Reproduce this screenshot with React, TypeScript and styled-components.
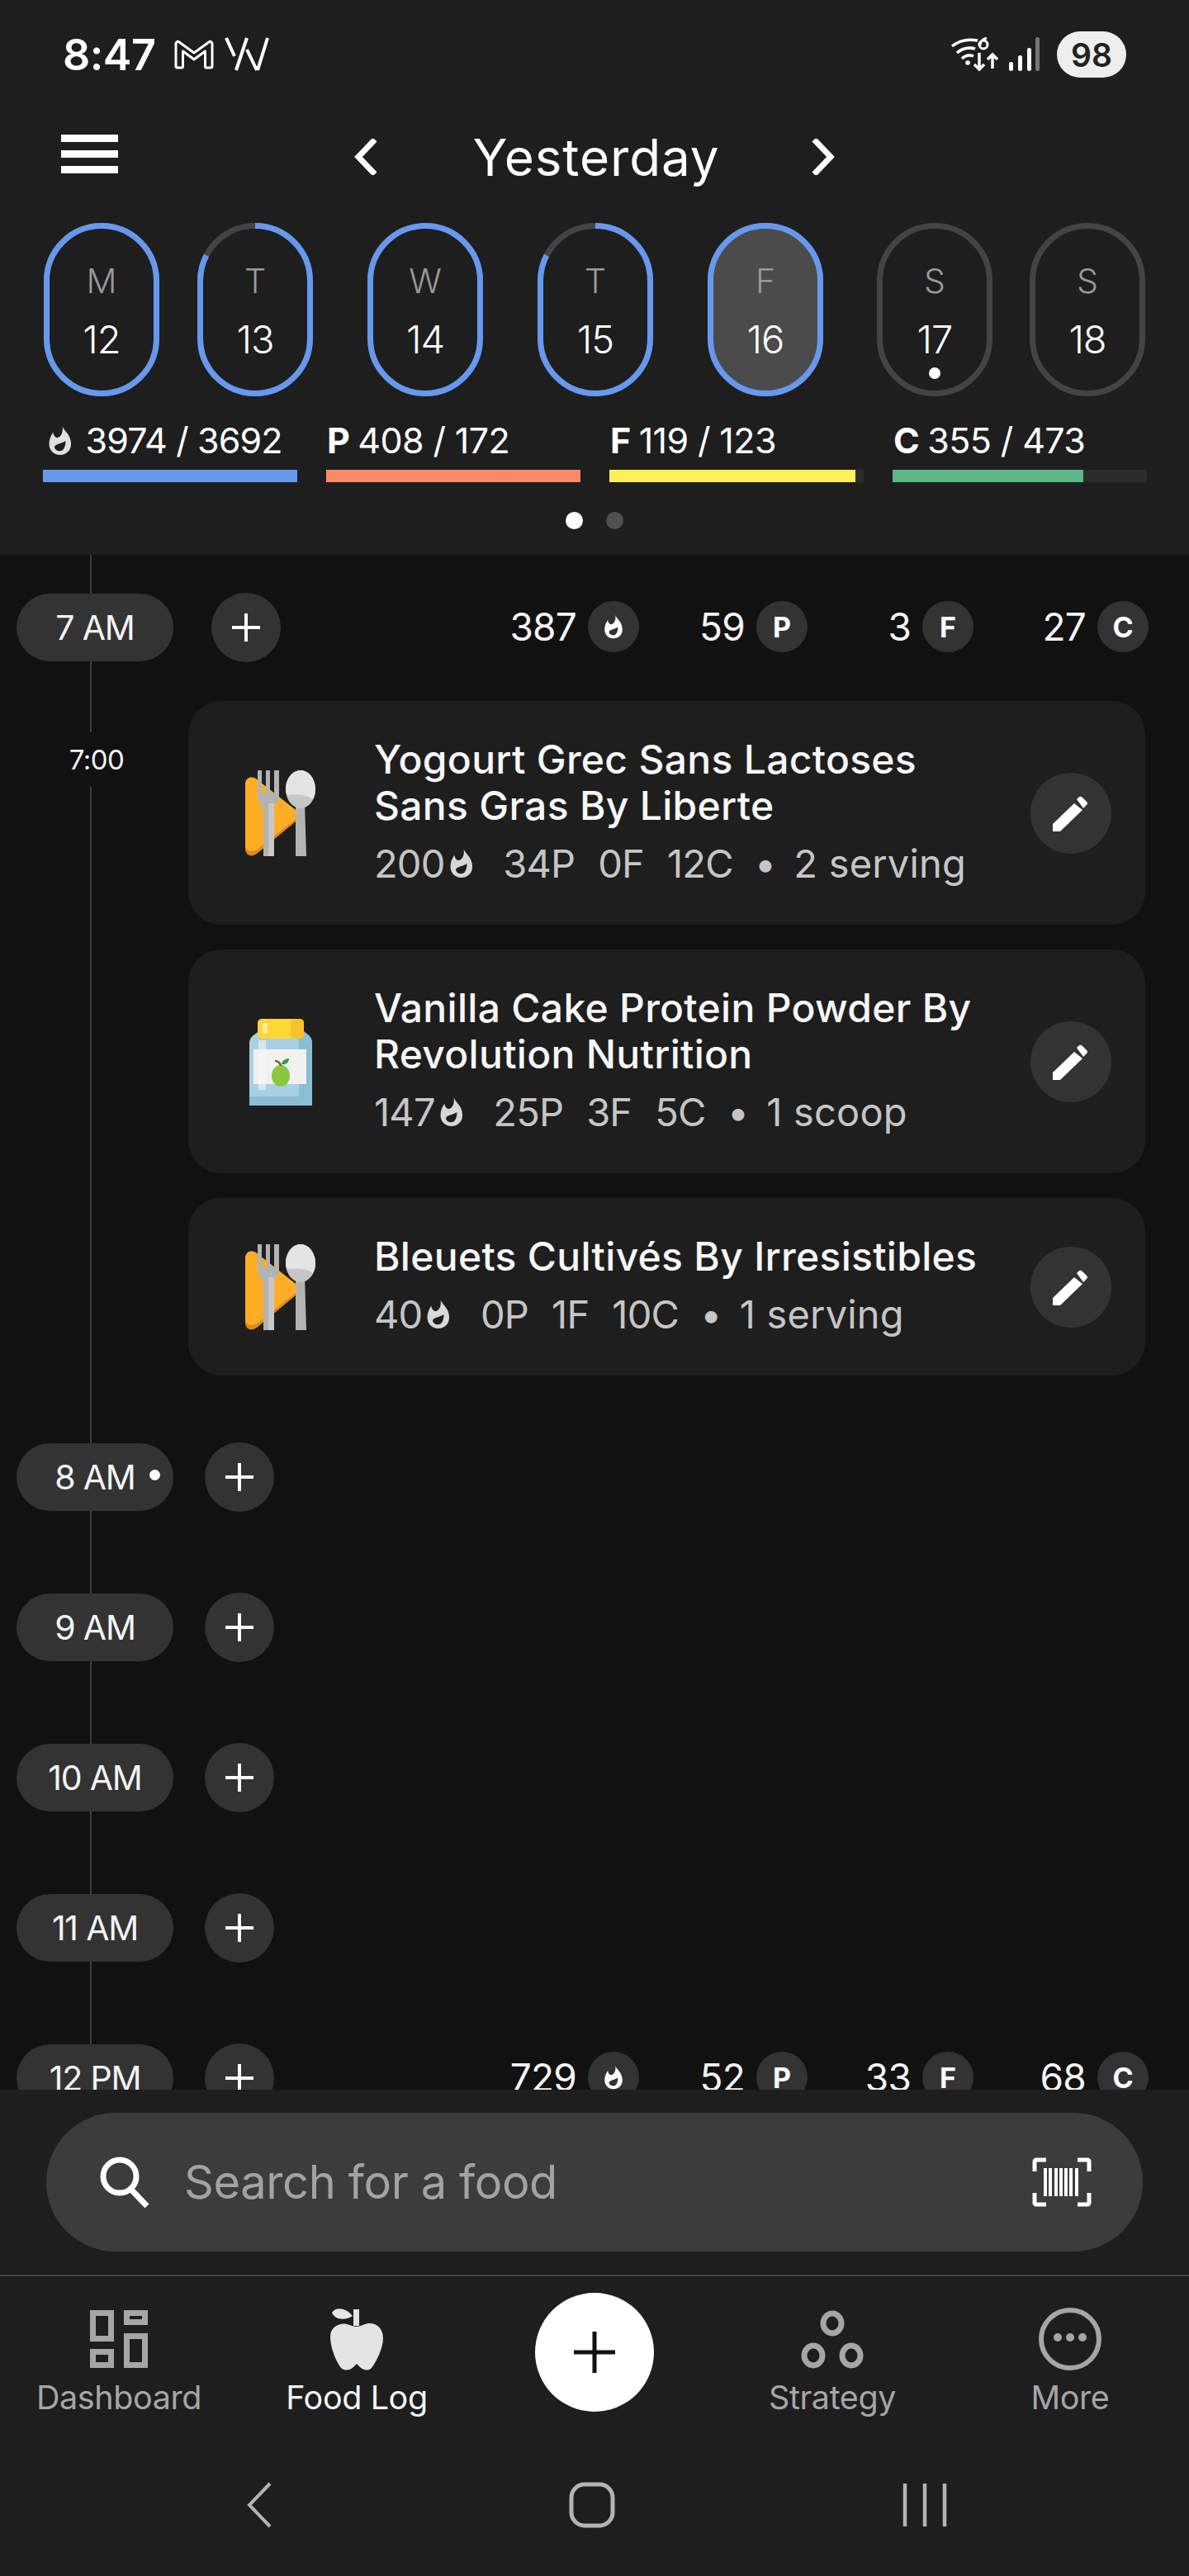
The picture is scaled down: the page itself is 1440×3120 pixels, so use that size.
import styled, { createGlobalStyle } from "styled-components";

const GlobalStyle = createGlobalStyle`
  html, body {
    margin: 0;
    padding: 0;
    background: #111111;
    font-family: "Inter", "Roboto", sans-serif;
    color: #ffffff;
  }
  * {
    box-sizing: border-box;
  }
`;

const StyledPage = styled.div`
  width: 1440px;
  height: 3120px;
  display: flex;
  flex-direction: column;
  overflow: hidden;
`;

const StyledHeader = styled.header`
  background: #1e1e1e;
  height: 672px;
  flex: none;
  padding-top: 38px;
`;

const StyledStatusBar = styled.div`
  height: 56px;
  display: flex;
  align-items: center;
  padding: 0 76px 0 76px;
`;

const StyledClock = styled.span`
  font-size: 52px;
  font-weight: 600;
  letter-spacing: -0.5px;
  margin-right: 22px;
`;

const StyledStatusRight = styled.div`
  margin-left: auto;
  display: flex;
  align-items: center;
`;

const StyledBattery = styled.div`
  width: 84px;
  height: 56px;
  border-radius: 28px;
  background: #eeeeee;
  color: #222222;
  font-size: 39px;
  font-weight: 600;
  display: flex;
  align-items: center;
  justify-content: center;
  margin-left: 20px;
`;

const StyledTopNav = styled.div`
  height: 100px;
  margin-top: 46px;
  display: grid;
  grid-template-columns: 429px 582px;
  align-items: center;
`;

const StyledHamburger = styled.div`
  width: 69px;
  margin: -8px 0 0 74px;
  display: flex;
  flex-direction: column;
  gap: 10px;
  & > span {
    height: 9px;
    background: #ffffff;
  }
`;

const StyledDateSwitch = styled.div`
  display: flex;
  align-items: center;
  justify-content: space-between;
`;

const StyledDateTitle = styled.h1`
  margin: 0 0 0 4px;
  font-size: 62px;
  font-weight: 400;
  letter-spacing: 0.9px;
`;

const StyledDayRow = styled.div`
  display: flex;
  margin-top: 30px;
  padding-left: 53px;
`;

const StyledDay = styled.div<{ $gap: number; $selected?: boolean }>`
  position: relative;
  width: 140px;
  height: 210px;
  margin-left: ${(props) => props.$gap}px;
  border-radius: 70px;
  background: ${(props) => (props.$selected ? "#4b4b4b" : "transparent")};
  display: flex;
  flex-direction: column;
  align-items: center;
  padding-top: 46px;
`;

const StyledRing = styled.svg`
  position: absolute;
  left: 0;
  top: 0;
`;

const StyledDayLetter = styled.span`
  font-size: 41px;
  line-height: 48px;
  color: #9a9a9a;
  font-weight: 300;
`;

const StyledDayNumber = styled.span`
  font-size: 47px;
  line-height: 54px;
  margin-top: 20px;
  color: #ffffff;
  font-weight: 300;
  letter-spacing: -1px;
`;

const StyledTodayDot = styled.span`
  position: absolute;
  left: 63px;
  top: 175px;
  width: 14px;
  height: 14px;
  border-radius: 50%;
  background: #ffffff;
`;

const StyledMacroRow = styled.div`
  display: grid;
  grid-template-columns: repeat(4, 308px);
  column-gap: 35px;
  margin-top: 30px;
  padding-left: 52px;
`;

const StyledMacroText = styled.div`
  display: flex;
  align-items: center;
  height: 46px;
  font-size: 43px;
  font-weight: 400;
  letter-spacing: -0.6px;
  gap: 10px;
  padding-left: 6px;
  & > b {
    font-weight: 700;
    margin-left: -5px;
  }
`;

const StyledCalorieTotal = styled.span`
  margin-left: 6px;
  letter-spacing: -0.9px;
`;

const StyledBarTrack = styled.div`
  height: 15px;
  margin-top: 13px;
  background: #2c2c2c;
`;

const StyledBarFill = styled.div<{ $color: string }>`
  height: 100%;
  background: ${(props) => props.$color};
`;

const StyledPager = styled.div`
  display: flex;
  justify-content: center;
  gap: 28px;
  margin-top: 36px;
`;

const StyledPagerDot = styled.span<{ $active?: boolean }>`
  width: 21px;
  height: 21px;
  border-radius: 50%;
  background: ${(props) => (props.$active ? "#ffffff" : "#505050")};
`;

const StyledTimeline = styled.main`
  position: relative;
  flex: 1;
  min-height: 0;
  overflow: hidden;
  background: #111111;
  padding: 47px 0 0 20px;
`;

const StyledRail = styled.div`
  position: absolute;
  left: 109px;
  top: 0;
  bottom: 0;
  width: 2px;
  background: #3d3d3d;
`;

const StyledHourRow = styled.div<{ $spaced?: boolean }>`
  position: relative;
  display: flex;
  align-items: center;
  height: 82px;
  margin-bottom: ${(props) => (props.$spaced ? "100px" : "0")};
`;

const StyledHourPill = styled.div`
  position: relative;
  width: 190px;
  height: 82px;
  border-radius: 41px;
  background: #333333;
  display: flex;
  align-items: center;
  justify-content: center;
  font-size: 41px;
  letter-spacing: -1.2px;
  color: #f4f4f4;
`;

const StyledNowDot = styled.span`
  position: absolute;
  left: 161px;
  top: 32px;
  width: 13px;
  height: 13px;
  border-radius: 50%;
  background: #ffffff;
`;

const StyledPlusButton = styled.div<{ $gap: number }>`
  width: 84px;
  height: 84px;
  flex: none;
  border-radius: 50%;
  background: #333333;
  margin-left: ${(props) => props.$gap}px;
  display: flex;
  align-items: center;
  justify-content: center;
`;

const StyledHourStats = styled.div`
  position: absolute;
  right: 49px;
  top: 9px;
  display: grid;
  grid-template-columns: 210px 204px 201px 212px;
`;

const StyledStat = styled.div`
  display: flex;
  align-items: center;
  justify-content: flex-end;
  gap: 14px;
  font-size: 46px;
  letter-spacing: -0.8px;
  color: #f4f4f4;
`;

const StyledStatBadge = styled.span`
  width: 62px;
  height: 62px;
  border-radius: 50%;
  background: #333333;
  display: flex;
  align-items: center;
  justify-content: center;
  font-size: 34px;
  font-weight: 700;
  letter-spacing: 0;
  color: #ffffff;
`;

const StyledEntries = styled.div`
  position: relative;
  display: grid;
  grid-template-columns: 208px 1159px;
  margin-top: 48px;
  margin-bottom: 82px;
`;

const StyledEntryTime = styled.div`
  justify-self: center;
  align-self: start;
  margin: 38px 0 0 -14px;
  height: 66px;
  width: 90px;
  background: #111111;
  display: flex;
  align-items: center;
  justify-content: center;
  font-size: 33px;
  letter-spacing: -0.6px;
  color: #f2f2f2;
`;

const StyledCards = styled.div`
  display: flex;
  flex-direction: column;
  gap: 30px;
`;

const StyledCard = styled.div`
  display: flex;
  align-items: center;
  background: #1e1e1e;
  border-radius: 40px;
  padding: 43px 41px 43px 32px;
`;

const StyledFoodThumb = styled.svg`
  flex: none;
  margin: -20px 33px -20px 0;
`;

const StyledCardBody = styled.div`
  flex: 1;
  min-width: 0;
  padding-right: 10px;
`;

const StyledCardTitle = styled.div`
  max-width: 770px;
  font-size: 48px;
  line-height: 56px;
  font-weight: 500;
  letter-spacing: 0.3px;
  color: #f6f6f6;
`;

const StyledCardMeta = styled.div`
  display: flex;
  align-items: center;
  height: 60px;
  margin: 11px 0 2px;
  font-size: 47px;
  letter-spacing: -0.8px;
  color: #c6c6c6;
`;

const StyledCalories = styled.span`
  display: flex;
  align-items: center;
  gap: 5px;
  margin-right: 36px;
`;

const StyledMetaItem = styled.span`
  margin-right: 28px;
`;

const StyledMetaDot = styled.span`
  margin: 0 22px 0 -2px;
`;

const StyledServing = styled.span`
  letter-spacing: 0.2px;
`;

const StyledEditButton = styled.div`
  width: 98px;
  height: 98px;
  flex: none;
  border-radius: 50%;
  background: #333333;
  display: flex;
  align-items: center;
  justify-content: center;
`;

const StyledBottom = styled.footer`
  background: #1e1e1e;
  height: 589px;
  flex: none;
  position: relative;
`;

const StyledSearchWrap = styled.div`
  padding: 28px 56px;
  border-bottom: 2px solid #444444;
`;

const StyledSearchBar = styled.div`
  height: 168px;
  border-radius: 84px;
  background: #3c3c3c;
  display: flex;
  align-items: center;
  padding: 0 62px 0 64px;
`;

const StyledSearchText = styled.span`
  font-size: 56px;
  letter-spacing: -0.4px;
  color: #a3a3a3;
  margin-left: 41px;
  flex: 1;
`;

const StyledTabs = styled.nav`
  display: grid;
  grid-template-columns: repeat(5, 288px);
  height: 191px;
  padding-top: 36px;
`;

const StyledTab = styled.div<{ $active?: boolean }>`
  display: flex;
  flex-direction: column;
  align-items: center;
  color: ${(props) => (props.$active ? "#f4f4f4" : "#a6a6a6")};
  font-size: 39.5px;
  line-height: 48px;
  letter-spacing: -0.4px;
`;

const StyledTabIcon = styled.div`
  height: 80px;
  margin-bottom: 7px;
  display: flex;
  align-items: center;
  justify-content: center;
`;

const StyledAddTab = styled.div`
  width: 144px;
  height: 144px;
  border-radius: 50%;
  background: #ffffff;
  justify-self: center;
  margin-top: -16px;
  display: flex;
  align-items: center;
  justify-content: center;
`;

const StyledSystemNav = styled.div`
  height: 172px;
  display: grid;
  grid-template-columns: repeat(3, 403px);
  justify-content: center;
  align-items: center;
  justify-items: center;
  padding-right: 6px;
`;

const StyledWave = styled.svg`
  margin-left: 12px;
`;

const StyledSignal = styled.svg`
  margin-left: 12px;
`;

function FlameIcon({ height, color }: { height: number; color: string }) {
  return (
    <svg width={height * 0.8} height={height} viewBox="11 13 30 39">
      <path
        d="M29 14C30 20 40 24 40 37C40 46 33 51 26 51C18 51 12 45 12 37C12 31 14 27 17 22C18 27 20 29 23 29C28 27 30 21 29 14ZM33 33C27 37 19 37 19 41C19 44 22 46 26 46C30 46 33 41 33 33Z"
        fill={color}
        fillRule="evenodd"
      />
    </svg>
  );
}

function PlusIcon({ size, weight, color }: { size: number; weight: number; color: string }) {
  const mid = size / 2;
  return (
    <svg width={size} height={size}>
      <path d={`M${mid} 0V${size}M0 ${mid}H${size}`} stroke={color} strokeWidth={weight} />
    </svg>
  );
}

function Chevron({ flip }: { flip?: boolean }) {
  return (
    <svg width="28" height="44" viewBox="0 0 28 44">
      <path
        d={flip ? "M3 1l20 21L3 43" : "M25 1L5 22l20 21"}
        fill="none"
        stroke="#fff"
        strokeWidth="7"
      />
    </svg>
  );
}

function PencilIcon() {
  return (
    <svg width="98" height="98" viewBox="9 5 98 98">
      <path d="M36 67L62 42L72 50L45 76H36Z" fill="#ffffff" />
      <path d="M65 37L68 34Q70 33 72 35L77 40Q79 42 77 44L73 48Z" fill="#ffffff" />
    </svg>
  );
}

function GmailGlyph() {
  return (
    <svg width="50" height="38" viewBox="0 0 50 38" fill="none">
      <path
        d="M3 33V6c0-2 2-3.500 4-2l18 13L43 4c2-1.500 4 0 4 2v27c0 1.500-.8 2-2 2h-5c-1 0-1.500-.5-1.500-1.500V15L25 25 11.500 15v18.500c0 1-.5 1.500-1.500 1.500H5c-1.200 0-2-.5-2-2z"
        stroke="#fff"
        strokeWidth="3"
        strokeLinejoin="round"
      />
    </svg>
  );
}

function WaveGlyph() {
  return (
    <StyledWave width="54" height="42" viewBox="0 0 54 42" fill="none">
      <path d="M2 1l10 22M27 1L14 40M27 15l12 25M52 1L40 40" stroke="#fff" strokeWidth="4" />
    </StyledWave>
  );
}

function WifiGlyph() {
  return (
    <svg width="58" height="42" viewBox="0 0 58 42" fill="none">
      <path d="M1 11C11 3 21 2 32 4M7 19c7-6 14-7 22-5M13 26c4-4 9-5 14-3" stroke="#fff" strokeWidth="3.500" />
      <circle cx="20" cy="31" r="2.800" fill="#fff" />
      <circle cx="39" cy="9" r="5" stroke="#fff" strokeWidth="3" />
      <path d="M43 1c-4 1-8 4-8 9" stroke="#fff" strokeWidth="3" />
      <path d="M34 19v20M28 33l6 6 6-6M50 38V21M44 27l6-6 6 6" stroke="#fff" strokeWidth="3.500" />
    </svg>
  );
}

function SignalGlyph() {
  return (
    <StyledSignal width="38" height="42" viewBox="0 0 38 42">
      <rect x="0" y="30" width="5" height="11" rx="2.500" fill="#fff" />
      <rect x="11" y="22" width="5" height="19" rx="2.500" fill="#fff" />
      <rect x="22" y="13" width="5" height="28" rx="2.500" fill="#fff" />
      <rect x="32" y="0" width="5" height="41" rx="2" fill="#777" />
    </StyledSignal>
  );
}

function DayRing({ percent }: { percent: number }) {
  const d = "M70 3.500A66.500 66.500 0 0 1 136.500 70V140A66.500 66.500 0 0 1 3.500 140V70A66.500 66.500 0 0 1 70 3.500";
  return (
    <StyledRing width="140" height="210" viewBox="0 0 140 210" fill="none">
      <path d={d} stroke="#444444" strokeWidth="7" />
      {percent > 0 && (
        <path d={d} stroke="#6699ee" strokeWidth="7" pathLength={100} strokeDasharray={`${percent} 100`} />
      )}
    </StyledRing>
  );
}

function CutleryThumb() {
  return (
    <StyledFoodThumb width="160" height="160" viewBox="0 4 160 160">
      <path d="M37 50c0-9 7-12 14-7l47 37c5 4 5 10 0 14l-47 39c-7 5-14 2-14-7z" fill="#e08a1c" />
      <path d="M37 50c0-9 7-12 14-7l47 37c5 4 5 8 0 11l-47 37c-7 4-14 2-14-6z" fill="#fdae26" />
      <path d="M52 32h5v27h5V32h5v27h5V32h6v30c0 9-6 12-7 16v58H59V78c-1-4-7-7-7-16z" fill="#b3b3b3" />
      <rect x="65" y="72" width="7" height="64" fill="#c9c9c9" />
      <path d="M98 70h11l2 66H98z" fill="#b3b3b3" />
      <ellipse cx="104" cy="55" rx="18" ry="23" fill="#c6c6c6" />
      <path d="M104 32c10 0 18 10 18 23 0 5-1 9-3 12-8-6-20-6-31-5-2-2-2-5-2-7 0-13 8-23 18-23z" fill="#e4e4e4" />
    </StyledFoodThumb>
  );
}

function BottleThumb() {
  return (
    <StyledFoodThumb width="160" height="160" viewBox="0 0 160 160">
      <path d="M42 58c0-8 5-10 9-13l5-5h49l5 5c4 3 8 5 8 13v75H42z" fill="#a9d0e2" />
      <path d="M94 40h11l5 5c4 3 8 5 8 13v75h-16V58c0-8-4-13-8-18z" fill="#8bbdd4" />
      <rect x="42" y="122" width="76" height="11" fill="#8bbdd4" />
      <rect x="47" y="65" width="64" height="42" fill="#f1f1f1" />
      <rect x="53" y="54" width="9" height="60" fill="#f7f7f7" opacity="0.6" />
      <rect x="52" y="28" width="56" height="24" rx="5" fill="#fdd835" />
      <rect x="92" y="28" width="16" height="24" rx="5" fill="#f5c32c" />
      <rect x="58" y="33" width="6" height="13" rx="2" fill="#ffec99" />
      <ellipse cx="80" cy="97" rx="11" ry="13" fill="#8cc63f" />
      <path d="M80 85c-1-4-3-6-7-6" stroke="#8a5a2b" strokeWidth="2.500" fill="none" />
      <path d="M81 83c1-5 5-7 9-7 0 5-4 8-9 7z" fill="#3e9b3e" />
    </StyledFoodThumb>
  );
}

type EntryCardProps = {
  thumb: "cutlery" | "bottle";
  title: string;
  calories: number;
  macros: string[];
  serving: string;
};

function EntryCard({ thumb, title, calories, macros, serving }: EntryCardProps) {
  return (
    <StyledCard>
      {thumb === "cutlery" ? <CutleryThumb /> : <BottleThumb />}
      <StyledCardBody>
        <StyledCardTitle>{title}</StyledCardTitle>
        <StyledCardMeta>
          <StyledCalories>
            {calories}
            <FlameIcon height={37} color="#d8d8d8" />
          </StyledCalories>
          {macros.map((m) => (
            <StyledMetaItem key={m}>{m}</StyledMetaItem>
          ))}
          <StyledMetaDot>•</StyledMetaDot>
          <StyledServing>{serving}</StyledServing>
        </StyledCardMeta>
      </StyledCardBody>
      <StyledEditButton>
        <PencilIcon />
      </StyledEditButton>
    </StyledCard>
  );
}

function HourStats({ values }: { values: number[] }) {
  return (
    <StyledHourStats>
      <StyledStat>
        {values[0]}
        <StyledStatBadge>
          <FlameIcon height={30} color="#ffffff" />
        </StyledStatBadge>
      </StyledStat>
      <StyledStat>
        {values[1]}
        <StyledStatBadge>P</StyledStatBadge>
      </StyledStat>
      <StyledStat>
        {values[2]}
        <StyledStatBadge>F</StyledStatBadge>
      </StyledStat>
      <StyledStat>
        {values[3]}
        <StyledStatBadge>C</StyledStatBadge>
      </StyledStat>
    </StyledHourStats>
  );
}

const days = [
  { letter: "M", num: 12, gap: 0, percent: 100 },
  { letter: "T", num: 13, gap: 46, percent: 87 },
  { letter: "W", num: 14, gap: 66, percent: 100 },
  { letter: "T", num: 15, gap: 66, percent: 87 },
  { letter: "F", num: 16, gap: 66, percent: 100, selected: true },
  { letter: "S", num: 17, gap: 65, percent: 0, today: true },
  { letter: "S", num: 18, gap: 45, percent: 0 },
];

const macroBars = [
  { label: "P", text: "408 / 172", color: "#fe8a65", width: 100 },
  { label: "F", text: "119 / 123", color: "#fdf058", width: 96.7 },
  { label: "C", text: "355 / 473", color: "#5cb885", width: 75 },
];

export default function App() {
  return (
    <StyledPage>
      <GlobalStyle />
      <StyledHeader>
        <StyledStatusBar>
          <StyledClock>8:47</StyledClock>
          <GmailGlyph />
          <WaveGlyph />
          <StyledStatusRight>
            <WifiGlyph />
            <SignalGlyph />
            <StyledBattery>98</StyledBattery>
          </StyledStatusRight>
        </StyledStatusBar>
        <StyledTopNav>
          <StyledHamburger>
            <span />
            <span />
            <span />
          </StyledHamburger>
          <StyledDateSwitch>
            <Chevron />
            <StyledDateTitle>Yesterday</StyledDateTitle>
            <Chevron flip />
          </StyledDateSwitch>
        </StyledTopNav>
        <StyledDayRow>
          {days.map((day) => (
            <StyledDay key={day.num} $gap={day.gap} $selected={day.selected}>
              <DayRing percent={day.percent} />
              <StyledDayLetter>{day.letter}</StyledDayLetter>
              <StyledDayNumber>{day.num}</StyledDayNumber>
              {day.today && <StyledTodayDot />}
            </StyledDay>
          ))}
        </StyledDayRow>
        <StyledMacroRow>
          <div>
            <StyledMacroText>
              <FlameIcon height={37} color="#e0e0e0" />
              <StyledCalorieTotal>3974 / 3692</StyledCalorieTotal>
            </StyledMacroText>
            <StyledBarTrack>
              <StyledBarFill $color="#6699ee" style={{ width: "100%" }} />
            </StyledBarTrack>
          </div>
          {macroBars.map((bar) => (
            <div key={bar.label}>
              <StyledMacroText>
                <b>{bar.label}</b>
                {bar.text}
              </StyledMacroText>
              <StyledBarTrack>
                <StyledBarFill $color={bar.color} style={{ width: `${bar.width}%` }} />
              </StyledBarTrack>
            </div>
          ))}
        </StyledMacroRow>
        <StyledPager>
          <StyledPagerDot $active />
          <StyledPagerDot />
        </StyledPager>
      </StyledHeader>

      <StyledTimeline>
        <StyledRail />
        <StyledHourRow>
          <StyledHourPill>7 AM</StyledHourPill>
          <StyledPlusButton $gap={46}>
            <PlusIcon size={34} weight={4} color="#ffffff" />
          </StyledPlusButton>
          <HourStats values={[387, 59, 3, 27]} />
        </StyledHourRow>
        <StyledEntries>
          <StyledEntryTime>7:00</StyledEntryTime>
          <StyledCards>
            <EntryCard
              thumb="cutlery"
              title="Yogourt Grec Sans Lactoses Sans Gras By Liberte"
              calories={200}
              macros={["34P", "0F", "12C"]}
              serving="2 serving"
            />
            <EntryCard
              thumb="bottle"
              title="Vanilla Cake Protein Powder By Revolution Nutrition"
              calories={147}
              macros={["25P", "3F", "5C"]}
              serving="1 scoop"
            />
            <EntryCard
              thumb="cutlery"
              title="Bleuets Cultivés By Irresistibles"
              calories={40}
              macros={["0P", "1F", "10C"]}
              serving="1 serving"
            />
          </StyledCards>
        </StyledEntries>
        {["8 AM", "9 AM", "10 AM", "11 AM"].map((hour) => (
          <StyledHourRow key={hour} $spaced>
            <StyledHourPill>
              {hour}
              {hour === "8 AM" && <StyledNowDot />}
            </StyledHourPill>
            <StyledPlusButton $gap={38}>
              <PlusIcon size={34} weight={4} color="#ffffff" />
            </StyledPlusButton>
          </StyledHourRow>
        ))}
        <StyledHourRow>
          <StyledHourPill>12 PM</StyledHourPill>
          <StyledPlusButton $gap={38}>
            <PlusIcon size={34} weight={4} color="#ffffff" />
          </StyledPlusButton>
          <HourStats values={[729, 52, 33, 68]} />
        </StyledHourRow>
      </StyledTimeline>

      <StyledBottom>
        <StyledSearchWrap>
          <StyledSearchBar>
            <svg width="62" height="62" viewBox="0 0 62 62" fill="none">
              <circle cx="25" cy="24" r="20" stroke="#fff" strokeWidth="7" />
              <path d="M39 40l19 20" stroke="#fff" strokeWidth="7" />
            </svg>
            <StyledSearchText>Search for a food</StyledSearchText>
            <svg width="72" height="60" viewBox="0 0 72 60" fill="none">
              <path d="M17 3H5a2 2 0 0 0-2 2v12M55 3h12a2 2 0 0 1 2 2v12M17 57H5a2 2 0 0 1-2-2V43M55 57h12a2 2 0 0 0 2-2V43" stroke="#fff" strokeWidth="5" />
              <path d="M16 13v34M22 13v34M29 13v34M35 13v34M41 13v34M47 13v34M54 13v34" stroke="#fff" strokeWidth="4" />
            </svg>
          </StyledSearchBar>
        </StyledSearchWrap>
        <StyledTabs>
          <StyledTab>
            <StyledTabIcon>
              <svg width="70" height="70" viewBox="0 0 70 70" fill="none" stroke="#a6a6a6" strokeWidth="7">
                <rect x="3.500" y="3.500" width="22" height="31" />
                <rect x="44.500" y="3.500" width="22" height="11" />
                <rect x="3.500" y="50.500" width="22" height="16" />
                <rect x="44.500" y="31.500" width="22" height="35" />
              </svg>
            </StyledTabIcon>
            Dashboard
          </StyledTab>
          <StyledTab $active>
            <StyledTabIcon>
              <svg width="64" height="76" viewBox="20 27 64 76" fill="#e4e4e4">
                <path d="M22 33C26 26 38 26 47 37C40 42 26 43 22 33Z" />
                <rect x="48" y="29" width="7" height="20" />
                <path d="M20 62C20 50 32 45 40 47C45 48 48 50 52 50C56 50 60 47 66 46C76 45 84 52 84 64C84 76 76 92 70 100C66 104 60 103 56 99L52 95L48 99C44 103 38 104 33 100C27 92 20 76 20 62Z" />
              </svg>
            </StyledTabIcon>
            Food Log
          </StyledTab>
          <StyledAddTab>
            <PlusIcon size={50} weight={5} color="#111111" />
          </StyledAddTab>
          <StyledTab>
            <StyledTabIcon>
              <svg width="78" height="72" viewBox="0 0 78 72" fill="none" stroke="#a6a6a6" strokeWidth="7">
                <ellipse cx="39" cy="17" rx="11" ry="12" />
                <ellipse cx="16" cy="56" rx="11" ry="12" />
                <ellipse cx="62" cy="56" rx="11" ry="12" />
              </svg>
            </StyledTabIcon>
            Strategy
          </StyledTab>
          <StyledTab>
            <StyledTabIcon>
              <svg width="78" height="78" viewBox="0 0 78 78" fill="none">
                <circle cx="39" cy="39" r="35" stroke="#a6a6a6" strokeWidth="6" />
                <circle cx="24" cy="37" r="5" fill="#a6a6a6" />
                <circle cx="39" cy="37" r="5" fill="#a6a6a6" />
                <circle cx="54" cy="37" r="5" fill="#a6a6a6" />
              </svg>
            </StyledTabIcon>
            More
          </StyledTab>
        </StyledTabs>
        <StyledSystemNav>
          <svg width="34" height="56" viewBox="0 0 34 56" fill="none">
            <path d="M30 2L5 28l25 26" stroke="#b4b4b4" strokeWidth="4" />
          </svg>
          <svg width="56" height="56" viewBox="0 0 56 56" fill="none">
            <rect x="3" y="3" width="50" height="50" rx="16" stroke="#b4b4b4" strokeWidth="5" />
          </svg>
          <svg width="56" height="56" viewBox="0 0 56 56" fill="none">
            <path d="M4 2v52M28 2v52M52 2v52" stroke="#b4b4b4" strokeWidth="4.500" />
          </svg>
        </StyledSystemNav>
      </StyledBottom>
    </StyledPage>
  );
}
